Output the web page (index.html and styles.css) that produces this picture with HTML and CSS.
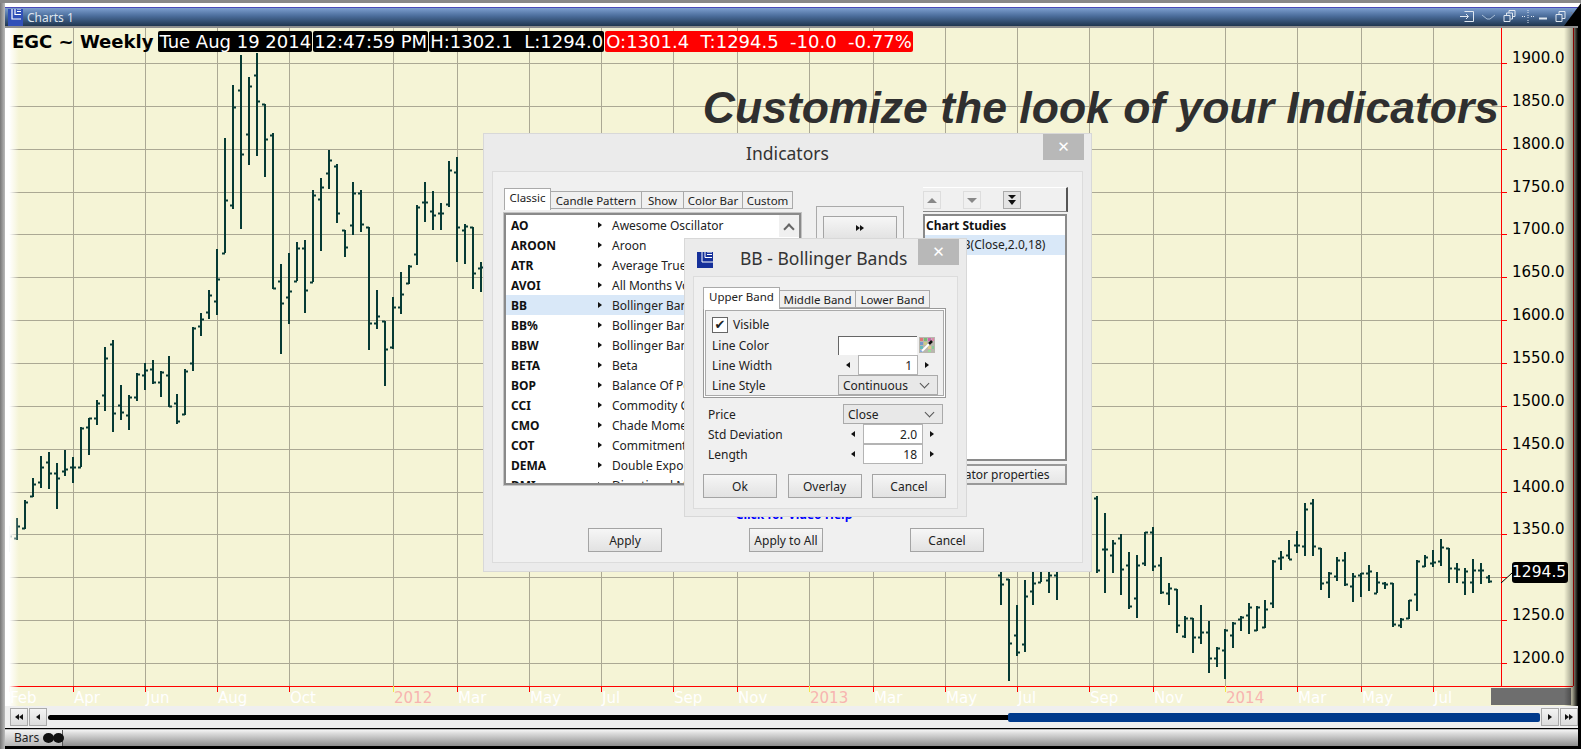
FILE: index.html
```html
<!DOCTYPE html>
<html lang="en">
<head>
    <meta charset="UTF-8">
    <title>Charts 1</title>
    <link rel="stylesheet" href="styles.css">
</head>
<body>

<div class="window">
    <div class="titlebar">
        <svg class="logo" width="15" height="17" viewBox="0 0 15 17">
            <rect width="15" height="17" fill="#3150b8"/>
            <path d="M4 0v10h9M7 0v5.500h6M9 0h4M9 2.500h4" fill="none" stroke="#fff" stroke-width="1.2"/>
        </svg>
        <span class="title-text">Charts 1</span>
        <div class="title-icons">
            <svg width="118" height="16" viewBox="0 0 118 16" fill="none" stroke="#dfe7f0" stroke-width="1">
                <path d="M4.500 2.500h9v10h-9M0 7.500h8M6 5l2.500 2.500L6 10"/>
                <path d="M22 6l5 4h3l5-4" stroke="#a9bed6"/>
                <path d="M44 6.500h6v6h-6zM46.500 6.500V4h6v6h-2M49 4V1.500h6v6h-2.500"/>
                <path d="M68 1v3M68 11v3M62 7.500h3M71 7.500h3M68 6v3" stroke-dasharray="1 1"/>
                <path d="M79 9.500h8" stroke-width="2"/>
                <path d="M96 5.500h6v7h-6zM99 5.500V2.500h6v7h-3"/>
                <path d="M111 3l7 8M118 3l-7 8" stroke="#778"/>
            </svg>
        </div>
        <div class="title-corner"></div>
    </div>

    <div class="chart" id="chart">
        <svg id="chart-svg" width="1576" height="680" viewBox="0 0 1576 680"></svg>
        <div class="fade"></div>

        <div class="quote">
            <span class="symbol">EGC ~ Weekly</span>
            <span class="qbox">Tue Aug 19 2014</span>
            <span class="qbox">12:47:59 PM</span>
            <span class="qbox">H:1302.1&nbsp; L:1294.0</span>
            <span class="qbox red">O:1301.4&nbsp; T:1294.5&nbsp; -10.0&nbsp; -0.77%</span>
        </div>

        <h1 class="headline">Customize the look of your Indicators</h1>
        <div class="last-price">1294.5</div>
        <div class="corner-box"></div>
    </div>

    <div class="scrollstrip">
        <button class="sbtn"><i class="arr left"></i><i class="arr left"></i></button>
        <button class="sbtn"><i class="arr left"></i></button>
        <div class="track"><div class="track-thumb"></div></div>
        <button class="sbtn"><i class="arr right"></i></button>
        <button class="sbtn"><i class="arr right"></i><i class="arr right"></i></button>
    </div>

    <div class="statusbar">
        <div class="bars-tab">Bars <span class="dots"><b></b><b></b></span></div>
        <div class="status-fill"></div>
    </div>
</div>

<!-- Indicators dialog -->
<div class="dialog dlg-indicators">
    <div class="dlg-head">
        <span class="dlg-title">Indicators</span>
        <button class="dlg-close">&#10005;</button>
    </div>
    <div class="dlg-body ind-body">
        <div class="ind-columns">
            <div class="ind-left">
                <div class="tabs ind-tabs">
                    <span class="tab active">Classic</span>
                    <span class="tab">Candle Pattern</span>
                    <span class="tab">Show</span>
                    <span class="tab">Color Bar</span>
                    <span class="tab">Custom</span>
                </div>
                <div class="list">
                    <div class="list-rows" id="list-rows"></div>
                    <div class="list-scroll"><span class="chev-up"></span></div>
                </div>
            </div>
            <div class="ind-mid">
                <div class="mid-frame">
                    <button class="btn mid-btn"><i class="arr right"></i><i class="arr right"></i></button>
                </div>
            </div>
            <div class="ind-right">
                <div class="toolbar">
                    <span class="tool"><i class="tri up"></i></span>
                    <span class="tool"><i class="tri down"></i></span>
                    <span class="tool on"><i class="dbl"></i></span>
                </div>
                <div class="studies">
                    <div class="studies-head">Chart Studies</div>
                    <div class="study-row">BB(Close,2.0,18)</div>
                </div>
                <button class="props-btn">Indicator properties</button>
            </div>
        </div>
        <div class="video-help">Click for Video Help</div>
        <div class="ind-actions">
            <button class="btn">Apply</button>
            <button class="btn">Apply to All</button>
            <button class="btn">Cancel</button>
        </div>
    </div>
</div>

<!-- BB properties dialog -->
<div class="dialog dlg-bb">
    <div class="dlg-head bb-head">
        <svg class="bb-logo" width="16" height="16" viewBox="0 0 16 16">
            <rect width="16" height="16" fill="#15309a"/>
            <path d="M5 0v10h11M8 0v5.500h7M10 0h5M10 2.500h5" fill="none" stroke="#fff" stroke-width="1"/>
        </svg>
        <span class="dlg-title">BB - Bollinger Bands</span>
        <button class="dlg-close">&#10005;</button>
    </div>
    <div class="dlg-body bb-body">
        <div class="tabs bb-tabs">
            <span class="tab active">Upper Band</span>
            <span class="tab">Middle Band</span>
            <span class="tab">Lower Band</span>
        </div>
        <div class="band-frame">
            <div class="field">
                <span class="check">&#10004;</span>
                <span>Visible</span>
            </div>
            <div class="field">
                <span>Line Color</span>
                <div class="ctrl">
                    <span class="swatch"></span>
                    <svg width="16" height="16" viewBox="0 0 16 16">
                        <rect width="16" height="16" fill="#b9b6ae"/>
                        <path d="M1 1h3v3H1z" fill="#d77"/><path d="M5 1h3v3H5z" fill="#7b7"/><path d="M9 1h3v3H9z" fill="#c6a"/><path d="M13 1h2v3h-2z" fill="#d8a"/>
                        <path d="M1 5h3v3H1z" fill="#79c"/><path d="M5 5h3v3H5z" fill="#cc8"/>
                        <path d="M1 9h3v3H1z" fill="#6bb"/><path d="M9 9h3v3H9z" fill="#dc8"/><path d="M13 9h2v3h-2z" fill="#8c9"/>
                        <path d="M1 13h3v2H1z" fill="#8ad"/><path d="M9 13h3v2H9z" fill="#9d9"/>
                        <path d="M3 14L11 6" stroke="#fff" stroke-width="2"/>
                        <path d="M10 7l3-3" stroke="#111" stroke-width="2.500"/>
                    </svg>
                </div>
            </div>
            <div class="field">
                <span>Line Width</span>
                <div class="spin"><i class="arr left"></i><span class="spin-val">1</span><i class="arr right"></i></div>
            </div>
            <div class="field">
                <span>Line Style</span>
                <div class="select"><span>Continuous</span><i class="chev"></i></div>
            </div>
        </div>
        <div class="band-fields">
            <div class="field">
                <span>Price</span>
                <div class="select"><span>Close</span><i class="chev"></i></div>
            </div>
            <div class="field">
                <span>Std Deviation</span>
                <div class="spin"><i class="arr left"></i><span class="spin-val">2.0</span><i class="arr right"></i></div>
            </div>
            <div class="field">
                <span>Length</span>
                <div class="spin"><i class="arr left"></i><span class="spin-val">18</span><i class="arr right"></i></div>
            </div>
        </div>
        <div class="bb-actions">
            <button class="btn">Ok</button>
            <button class="btn">Overlay</button>
            <button class="btn">Cancel</button>
        </div>
    </div>
</div>

<script src="chart.js"></script>
</body>
</html>
```

FILE: styles.css
```css
* {
    margin: 0;
    padding: 0;
    box-sizing: border-box;
}

body {
    width: 1581px;
    height: 749px;
    overflow: hidden;
    position: relative;
    font-family: "Noto Sans", "Open Sans", sans-serif;
    font-size: 12px;
    color: #222;
    background: #fff;
}

button {
    font-family: inherit;
    font-size: 12px;
    color: #222;
}

/* main chart window */
.window {
    display: flex;
    flex-direction: column;
    width: 1581px;
    height: 749px;
    padding: 7px 3px 3px 5px;
    background: linear-gradient(#888 0, #888 3px, #fff 3px, #fff 7px, #000 7px);
    position: relative;
}

.window::before {
    content: "";
    position: absolute;
    left: 0;
    top: 3px;
    bottom: 0;
    width: 5px;
    background: linear-gradient(90deg, #777, #bbb);
}

.titlebar {
    display: flex;
    align-items: center;
    height: 19px;
    flex: none;
    padding-left: 3px;
    border-top: 1px solid #4848b8;
    background: linear-gradient(#7d9fcf, #4a6c9a 45%, #20364f);
    color: #dfe6ee;
    position: relative;
}

.logo {
    margin-right: 4px;
}

.title-icons {
    margin-left: auto;
    display: flex;
    height: 16px;
}

.title-corner {
    position: absolute;
    right: -3px;
    top: -5px;
    width: 17px;
    height: 23px;
    background: #000;
    clip-path: polygon(100% 0, 100% 100%, 0 100%);
}

.chart {
    position: relative;
    flex: none;
    height: 680px;
    background: #f5f4d6;
    border-top: 2px solid #8f8f8f;
}

#chart-svg {
    display: block;
    position: absolute;
    left: 0;
    top: -2px;
}

.fade {
    position: absolute;
    left: 0;
    top: 0;
    bottom: 0;
    width: 14px;
    background: linear-gradient(90deg, #fff 30%, rgba(255, 255, 255, 0));
}

.chart::after {
    content: "";
    position: absolute;
    right: 0;
    top: 0;
    bottom: 0;
    width: 14px;
    background: linear-gradient(90deg, rgba(0, 0, 0, 0), rgba(0, 0, 0, 0.35) 60%, #000);
}

.quote {
    position: absolute;
    left: 7px;
    top: 3px;
    display: flex;
    align-items: center;
    gap: 1px;
    font-family: "DejaVu Sans", sans-serif;
    font-size: 18px;
    white-space: nowrap;
}

.symbol {
    font-weight: bold;
    color: #000;
    margin-right: 4px;
    font-size: 18px;
}

.qbox {
    background: #000;
    color: #fff;
    height: 21px;
    line-height: 21px;
    padding: 0 1px;
    border-radius: 2px;
}

.qbox.red {
    background: #f00;
}

.headline {
    position: absolute;
    right: 79px;
    top: 55px;
    font-family: "Liberation Sans", sans-serif;
    font-size: 44.500px;
    font-weight: bold;
    font-style: italic;
    color: #2f2f2f;
    white-space: nowrap;
}

.last-price {
    position: absolute;
    left: 1507px;
    top: 534px;
    width: 56px;
    height: 21px;
    line-height: 21px;
    background: #000;
    color: #fff;
    border-radius: 3px;
    font-family: "DejaVu Sans", sans-serif;
    font-size: 15.500px;
    white-space: nowrap;
    overflow: hidden;
}

.corner-box {
    position: absolute;
    left: 1486px;
    top: 660px;
    width: 80px;
    height: 17px;
    background: #6e6e6e;
}

/* scroll strip under the chart */
.scrollstrip {
    display: flex;
    align-items: center;
    flex: none;
    height: 22px;
    padding: 0 0 0 5px;
    gap: 1px;
    background: #efefef;
}

.sbtn {
    width: 18px;
    height: 18px;
    display: flex;
    align-items: center;
    justify-content: center;
    background: linear-gradient(#f4f4f4, #dcdcdc);
    border: 1px solid #aaa;
}

.track {
    flex: 1;
    height: 5px;
    background: #000;
    position: relative;
    border-radius: 3px;
}

.track-thumb {
    position: absolute;
    right: 0;
    top: -2px;
    width: 532px;
    height: 9px;
    background: #003a8c;
    border-radius: 2px;
}

.statusbar {
    display: flex;
    flex: 1;
    border-top: 1px solid #bbb;
    background: linear-gradient(#f3f3f3, #ddd 20%, #8d8d8d);
    margin-top: 1px;
    min-height: 0;
}

.bars-tab {
    display: flex;
    align-items: center;
    gap: 4px;
    width: 58px;
    padding-left: 9px;
    border-right: 1px solid #555;
    background: linear-gradient(#f3f3f3, #b4b4b4);
    line-height: 1;
}

.dots {
    display: inline-flex;
}

.dots b {
    width: 11px;
    height: 10px;
    background: #111;
    border-radius: 50%;
    margin-right: -1px;
}

.status-fill {
    flex: 1;
}

/* little arrows */
.arr {
    display: inline-block;
    width: 0;
    height: 0;
    border-top: 3.500px solid transparent;
    border-bottom: 3.500px solid transparent;
}

.arr.left {
    border-right: 4px solid #111;
}

.arr.right {
    border-left: 4px solid #111;
}

/* dialogs */
.dialog {
    position: absolute;
    background: #ebebeb;
    border: 1px solid #d8d8d8;
}

.dlg-indicators {
    left: 483px;
    top: 133px;
    width: 609px;
    height: 439px;
    padding: 0 8px 8px;
    display: flex;
    flex-direction: column;
}

.dlg-bb {
    left: 684px;
    top: 238px;
    width: 283px;
    height: 279px;
    padding: 0 8px 7px;
    display: flex;
    flex-direction: column;
}

.dlg-head {
    height: 37px;
    flex: none;
    display: flex;
    align-items: center;
    justify-content: center;
    position: relative;
}

.dlg-title {
    font-size: 17.500px;
    color: #333;
}

.dlg-close {
    position: absolute;
    right: -1px;
    top: 0;
    width: 41px;
    height: 26px;
    border: none;
    background: #b8b8b8;
    color: #fff;
    font-size: 15px;
    font-weight: bold;
    font-family: "DejaVu Sans", sans-serif;
}

.bb-head {
    justify-content: flex-start;
}

.bb-logo {
    margin: 4px 27px 0 4px;
}

.bb-head .dlg-title {
    margin-top: 1px;
}

.dlg-body {
    flex: 1;
    background: #f0f0f0;
    border: 1px solid #dcdcdc;
    display: flex;
    flex-direction: column;
}

.ind-body {
    padding: 16px 16px 10px 11px;
}

.ind-columns {
    display: flex;
    height: 298px;
}

.ind-left {
    width: 297px;
    flex: none;
}

.tabs {
    display: flex;
    align-items: flex-end;
    height: 21px;
    position: relative;
    font-size: 11.500px;
}

.tab {
    height: 18px;
    line-height: 17px;
    text-align: center;
    background: #f0f0f0;
    border: 1px solid #aaa;
    border-left-width: 0;
    white-space: nowrap;
}

.tab.active {
    height: 22px;
    line-height: 18px;
    background: #fff;
    border-left-width: 1px;
    border-bottom: none;
    margin-bottom: -1px;
    position: relative;
    z-index: 1;
}

.ind-tabs .tab:nth-child(1) { width: 47px; }
.ind-tabs .tab:nth-child(2) { width: 91px; }
.ind-tabs .tab:nth-child(3) { width: 42px; }
.ind-tabs .tab:nth-child(4) { width: 59px; }
.ind-tabs .tab:nth-child(5) { width: 50px; }

.bb-tabs .tab:nth-child(1) { width: 77px; }
.bb-tabs .tab:nth-child(2) { width: 76px; }
.bb-tabs .tab:nth-child(3) { width: 74px; }

.list {
    display: flex;
    width: 297px;
    height: 272px;
    margin-top: 4px;
    background: #fff;
    border: 2px solid #8a8a8a;
    box-shadow: 0 0 0 1px #c4c4c4;
    overflow: hidden;
}

.list-rows {
    flex: 1;
}

.list-row {
    display: flex;
    align-items: center;
    height: 20px;
    padding-left: 5px;
    white-space: nowrap;
}

.list-row.selected {
    background: #d9e8f8;
}

.list-row b {
    width: 87px;
    color: #111;
}

.list-row .arr {
    margin-right: 10px;
}

.list-scroll {
    width: 20px;
    height: 22px;
    background: #f0f0f0;
    display: flex;
    align-items: center;
    justify-content: center;
}

.chev-up {
    width: 8px;
    height: 8px;
    margin-top: 5px;
    border-left: 2px solid #666;
    border-top: 2px solid #666;
    transform: rotate(45deg);
}

.ind-mid {
    width: 122px;
    flex: none;
    padding: 18px 0 0 15px;
}

.mid-frame {
    width: 88px;
    height: 70px;
    padding: 9px 0 0 6px;
    border: 1px solid #aaa;
}

.mid-btn {
    display: flex;
    align-items: center;
    justify-content: center;
    height: 40px;
}

.btn {
    width: 74px;
    height: 24px;
    background: linear-gradient(#f6f6f6, #e2e2e2);
    border: 1px solid #a4a4a4;
}

.ind-right {
    width: 144px;
    flex: none;
    display: flex;
    flex-direction: column;
}

.toolbar {
    display: flex;
    gap: 22px;
    flex: none;
    height: 25px;
    width: 145px;
    margin-top: -1px;
    padding-top: 3px;
    border-top: 1px solid #fff;
    border-bottom: 1px solid #888;
    border-right: 2px solid #555;
}

.tool {
    width: 18px;
    height: 18px;
    display: flex;
    align-items: center;
    justify-content: center;
    border: 1px solid #ddd;
}

.tool.on {
    border-color: #aaa;
    background: #e4e4e4;
}

.tri {
    width: 0;
    height: 0;
    border-left: 5px solid transparent;
    border-right: 5px solid transparent;
}

.tri.up {
    border-bottom: 5px solid #888;
}

.tri.down {
    border-top: 5px solid #888;
}

.dbl {
    width: 0;
    height: 0;
    margin-top: 5px;
    border-left: 4px solid transparent;
    border-right: 4px solid transparent;
    border-top: 5px solid #111;
    position: relative;
}

.dbl::before {
    content: "";
    position: absolute;
    left: -4px;
    top: -10px;
    border-left: 4px solid transparent;
    border-right: 4px solid transparent;
    border-top: 4px solid #111;
}

.studies {
    width: 144px;
    height: 247px;
    flex: none;
    margin-top: 2px;
    background: #fff;
    border: 2px solid #8a8a8a;
}

.studies-head {
    font-weight: bold;
    color: #111;
    height: 19px;
    line-height: 19px;
    padding-left: 1px;
}

.study-row {
    height: 20px;
    line-height: 20px;
    background: #d9e8f8;
    padding-left: 30px;
    white-space: nowrap;
}

.props-btn {
    width: 144px;
    height: 21px;
    flex: none;
    margin-top: 3px;
    line-height: 15px;
    background: linear-gradient(#f4f4f4, #e6e6e6);
    border: 2px solid #999;
    white-space: nowrap;
    text-align: left;
    padding-left: 12px;
}

.video-help {
    margin-top: 23px;
    height: 12px;
    line-height: 12px;
    text-align: center;
    color: #00f;
    font-weight: bold;
    padding-left: 18px;
}

.ind-actions {
    display: flex;
    justify-content: space-between;
    padding: 0 82px 0 84px;
    margin-top: 7px;
}

.bb-body {
    padding: 10px 10px 0 9px;
}

.band-frame {
    height: 90px;
    padding: 5px 7px 0 8px;
    border: 1px solid #999;
    box-shadow: inset 0 0 0 1px #fff, inset 0 0 0 2px #aaa;
    margin-right: 1px;
}

.field {
    display: flex;
    align-items: center;
    justify-content: space-between;
    height: 20px;
    white-space: nowrap;
}

.field:first-child {
    justify-content: flex-start;
    gap: 5px;
}

.band-frame .field:first-child {
    height: 21px;
}

.check {
    width: 16px;
    height: 16px;
    border: 1px solid #666;
    background: #fff;
    font-size: 13px;
    line-height: 14px;
    text-align: center;
    font-family: "DejaVu Sans", sans-serif;
}

.ctrl {
    display: flex;
    align-items: center;
    margin-right: 3px;
    gap: 2px;
}

.swatch {
    width: 79px;
    height: 19px;
    background: #fff;
    border-top: 1px solid #666;
    border-left: 1px solid #666;
}

.spin {
    display: flex;
    align-items: center;
    margin-right: 9px;
}

.spin .arr.left {
    margin-right: 8px;
}

.spin .arr.right {
    margin-left: 7px;
}

.spin-val {
    width: 60px;
    height: 20px;
    line-height: 20px;
    padding-right: 5px;
    text-align: right;
    background: #fff;
    border: 1px solid #b4b4b4;
}

.select {
    display: flex;
    align-items: center;
    justify-content: space-between;
    width: 100px;
    height: 20px;
    padding: 0 7px 0 4px;
    background: #e8e8e8;
    border: 1px solid #aaa;
}

.chev {
    width: 7px;
    height: 7px;
    margin: -3px 2px 0 0;
    border-right: 1.500px solid #555;
    border-bottom: 1.500px solid #555;
    transform: rotate(45deg);
}

.band-fields {
    margin-top: 6px;
    padding: 0 4px 0 5px;
}

.band-fields .field:first-child {
    justify-content: space-between;
}

.bb-actions {
    display: flex;
    justify-content: space-between;
    margin-top: 10px;
    margin-right: 1px;
}
```

FILE: chart.js
```js
// weekly bars: index, high, low, open, close (pixel rows of the page)
const bars = [
    [0,526,552,544,536],[1,518,540,538,526],[2,500,529,528,502],[3,478,497,496,484],
    [4,456,488,482,467],[5,452,489,462,473],[6,463,509,473,478],[7,450,476,471,469],
    [8,457,483,467,467],[9,427,467,467,428],[10,418,455,427,418],[11,400,425,418,403],
    [12,347,411,395,358],[13,340,432,344,413],[14,385,420,405,412],[15,395,430,415,397],
    [16,373,401,397,374],[17,363,390,375,370],[18,360,384,369,382],[19,371,397,382,372],
    [20,356,407,375,406],[21,394,424,403,421],[22,369,415,414,371],[23,327,371,363,328],
    [24,313,336,326,319],[25,290,319,312,295],[26,249,315,301,279],[27,138,253,253,200],
    [28,85,209,205,107],[29,55,229,90,154],[30,77,165,134,86],[31,53,156,75,101],
    [32,104,177,104,139],[33,133,289,135,288],[34,264,354,281,303],[35,253,324,297,291],
    [36,242,281,281,248],[37,240,313,248,290],[38,190,282,282,195],[39,178,251,199,187],
    [40,150,189,173,160],[41,164,223,166,213],[42,230,257,230,247],[43,182,235,225,193],
    [44,190,232,193,224],[45,227,350,227,323],[46,290,329,323,316],[47,321,386,321,349],
    [48,297,349,347,307],[49,272,314,307,294],[50,265,284,283,266],[51,205,265,254,207],
    [52,182,222,202,202],[53,191,230,211,215],[54,203,230,213,213],[55,161,207,204,170],
    [56,157,262,172,227],[57,224,264,230,226],[58,227,289,227,273],[59,262,292,268,267],
    [124,560,605,575,584],[125,579,681,579,643],[126,605,656,635,652],[127,580,652,644,596],
    [128,560,605,591,583],[129,560,582,582,570],[130,560,593,580,575],[131,560,600,575,570],
    [136,496,573,498,570],[137,513,593,549,549],[138,540,573,555,543],[139,534,595,538,569],
    [140,552,609,565,606],[141,555,618,598,565],[142,532,566,563,532],[143,527,571,532,566],
    [144,557,594,565,592],[145,583,605,593,588],[146,589,633,589,625],[147,616,638,636,618],
    [148,618,653,618,637],[149,605,644,637,632],[150,621,673,632,658],[151,647,667,658,648],
    [152,629,679,650,630],[153,622,648,635,623],[154,616,631,619,617],[155,603,634,615,607],
    [156,606,631,630,607],[157,600,628,627,609],[158,560,608,603,561],[159,551,570,558,557],
    [160,540,559,555,559],[161,531,553,545,545],[162,503,556,546,509],[163,499,556,503,546],
    [164,548,590,548,583],[165,572,598,582,573],[166,557,581,576,560],[167,552,586,560,584],
    [168,573,602,586,576],[169,573,597,575,573],[170,565,591,573,571],[171,572,593,593,582],
    [172,582,589,583,584],[173,583,627,583,624],[174,618,628,625,619],[175,600,619,618,600],
    [176,560,611,594,561],[177,555,567,566,557],[178,550,567,563,562],[179,539,566,561,547],
    [180,548,583,548,568],[181,563,583,568,569],[182,568,595,582,571],[183,559,593,582,570],
    [184,563,584,570,570],[185,575,583,577,581]
];

const gridX = [73,145,217,289,393,457,529,601,673,737,809,873,945,1017,1089,1153,1225,1297,1361,1433];
const dateLabels = [
    [9,'Feb'],[73,'Apr'],[145,'Jun'],[217,'Aug'],[289,'Oct'],[393,'2012',1],[457,'Mar'],[529,'May'],
    [601,'Jul'],[673,'Sep'],[737,'Nov'],[809,'2013',1],[873,'Mar'],[945,'May'],[1017,'Jul'],[1089,'Sep'],
    [1153,'Nov'],[1225,'2014',1],[1297,'Mar'],[1361,'May'],[1433,'Jul']
];

// the svg's corner sits at page (5,26)
const ox = 5, oy = 26;
const top_ = 28, axisX = 1501, axisEnd = 1573, floorY = 686;
let out = '';

function line(x1, y1, x2, y2, color, w) {
    out += `<line x1="${x1 - ox}" y1="${y1 - oy}" x2="${x2 - ox}" y2="${y2 - oy}" stroke="${color}" stroke-width="${w || 1}"/>`;
}

gridX.forEach(x => line(x + 0.5, top_, x + 0.5, floorY, '#aba894'));

for (let i = 0; i <= 14; i++) {
    const y = Math.round(63 + i * 42.86) + 0.5;
    line(6, y, axisX, y, '#aba894');
    line(axisX, y, axisX + 6, y, '#f00');
    const price = (1900 - i * 50).toFixed(1);
    out += `<text x="${1512 - ox}" y="${y - oy - 1}" font-family="DejaVu Sans" font-size="15" fill="#000">${price}</text>`;
}

bars.forEach(([k, hi, lo, open, close]) => {
    const x = 9 + 8 * k;
    line(x, hi, x, lo, '#063a34', 2);
    line(x - 3, open + 0.5, x, open + 0.5, '#063a34', 2);
    line(x, close + 0.5, x + 3, close + 0.5, '#063a34', 2);
});

line(6, floorY + 0.5, axisEnd, floorY + 0.5, '#f00');
line(axisX + 0.5, top_, axisX + 0.5, floorY, '#f00');
line(axisEnd + 0.5, top_, axisEnd + 0.5, floorY, '#f00');
line(axisX, 583, 1512, 573, '#000');

dateLabels.forEach(([x, text, isYear]) => {
    line(x + 0.5, floorY, x + 0.5, floorY + 6, isYear ? '#f2e84a' : '#f00');
    out += `<text x="${x + 1 - ox}" y="${703 - oy}" font-family="DejaVu Sans" font-size="15" fill="${isYear ? '#f8b4b0' : '#fff'}">${text}</text>`;
});

document.getElementById('chart-svg').innerHTML = out;

const rows = [
    ['AO','Awesome Oscillator'],['AROON','Aroon'],['ATR','Average True Range'],['AVOI','All Months Volume'],
    ['BB','Bollinger Bands'],['BB%','Bollinger Bands %'],['BBW','Bollinger Bands Width'],['BETA','Beta'],
    ['BOP','Balance Of Power'],['CCI','Commodity Channel'],['CMO','Chade Momentum'],['COT','Commitment of Traders'],
    ['DEMA','Double Exponential'],['DMI','Directional Movement']
];

document.getElementById('list-rows').innerHTML = rows.map(([name, desc]) =>
    `<div class="list-row${name === 'BB' ? ' selected' : ''}"><b>${name}</b><i class="arr right"></i><span>${desc}</span></div>`
).join('');
```
